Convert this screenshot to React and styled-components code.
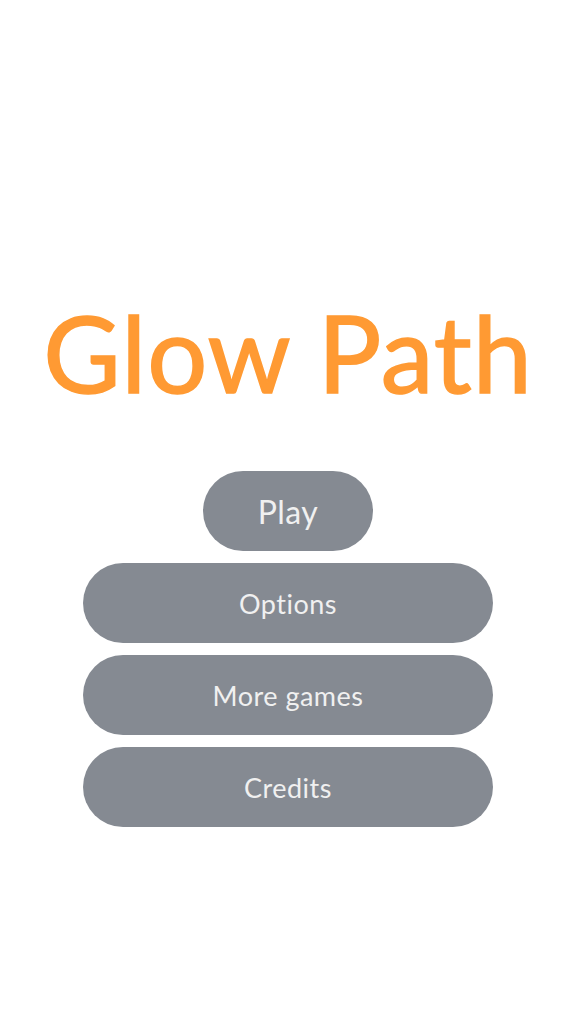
import React from 'react';
import styled, { createGlobalStyle } from 'styled-components';

const GlobalStyle = createGlobalStyle`
    html, body {
        margin: 0;
        padding: 0;
        background: #ffffff;
    }
    body {
        font-family: "Lato", "Liberation Sans", sans-serif;
    }
`;

const Screen = styled.div`
    width: 576px;
    height: 1024px;
    display: flex;
    flex-direction: column;
    align-items: center;
    background: #ffffff;
`;

const Title = styled.h1`
    margin: 290px 0 0 0;
    height: 150px;
    font-family: "Lato", "Liberation Sans", sans-serif;
    font-weight: 400;
    font-size: 106px;
    line-height: 124px;
    letter-spacing: 1px;
    color: #ff9a33;
    -webkit-text-stroke: 1.5px #ff9a33;
`;

const Menu = styled.div`
    margin-top: 31px;
    display: flex;
    flex-direction: column;
    align-items: center;
    gap: 12px;
`;

const MenuButton = styled.button`
    width: ${props => props.wide ? '410px' : '170px'};
    height: 80px;
    border: none;
    border-radius: 40px;
    background: #858a92;
    color: #f0f0f0;
    font-family: "Lato", "Liberation Sans", sans-serif;
    font-size: ${props => props.wide ? '27px' : '32px'};
    letter-spacing: 0.5px;
    cursor: pointer;
    padding: 0;
`;

const App = () => {
    const items = ['Options', 'More games', 'Credits'];

    return (
        <>
            <GlobalStyle />
            <Screen>
                <Title>Glow Path</Title>
                <Menu>
                    <MenuButton>Play</MenuButton>
                    {items.map(item => (
                        <MenuButton wide key={item}>{item}</MenuButton>
                    ))}
                </Menu>
            </Screen>
        </>
    );
};

export default App;
